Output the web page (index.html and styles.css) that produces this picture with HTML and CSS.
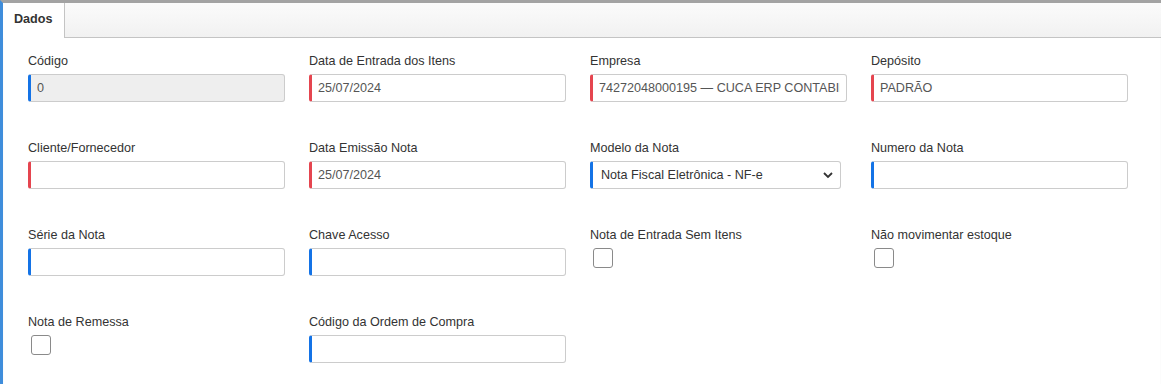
FILE: index.html
```html
<!DOCTYPE html>
<html>
<head>
    <meta charset="UTF-8">
    <title>Nota de Entrada</title>
    <link rel="stylesheet" href="styles.css">
</head>
<body>
  <div class="panel">
    <div class="tabs">
      <div class="tab active">Dados</div>
    </div>
    <div class="form">
      <div class="field">
        <label>Código</label>
        <input type="text" class="ctl req-blue readonly" value="0" readonly>
      </div>
      <div class="field">
        <label>Data de Entrada dos Itens</label>
        <input type="text" class="ctl req-red" value="25/07/2024">
      </div>
      <div class="field">
        <label>Empresa</label>
        <input type="text" class="ctl req-red" value="74272048000195 — CUCA ERP CONTABILIDADE">
      </div>
      <div class="field">
        <label>Depósito</label>
        <input type="text" class="ctl req-red" value="PADRÃO">
      </div>

      <div class="field">
        <label>Cliente/Fornecedor</label>
        <input type="text" class="ctl req-red" value="">
      </div>
      <div class="field">
        <label>Data Emissão Nota</label>
        <input type="text" class="ctl req-red" value="25/07/2024">
      </div>
      <div class="field">
        <label>Modelo da Nota</label>
        <select class="ctl req-blue sel">
          <option selected>Nota Fiscal Eletrônica - NF-e</option>
          <option>Nota Fiscal de Consumidor - NFC-e</option>
        </select>
      </div>
      <div class="field">
        <label>Numero da Nota</label>
        <input type="text" class="ctl req-blue" value="">
      </div>

      <div class="field">
        <label>Série da Nota</label>
        <input type="text" class="ctl req-blue" value="">
      </div>
      <div class="field">
        <label>Chave Acesso</label>
        <input type="text" class="ctl req-blue" value="">
      </div>
      <div class="field">
        <label>Nota de Entrada Sem Itens</label>
        <input type="checkbox" class="check">
      </div>
      <div class="field">
        <label>Não movimentar estoque</label>
        <input type="checkbox" class="check">
      </div>

      <div class="field">
        <label>Nota de Remessa</label>
        <input type="checkbox" class="check">
      </div>
      <div class="field">
        <label>Código da Ordem de Compra</label>
        <input type="text" class="ctl req-blue" value="">
      </div>
    </div>
  </div>
</body>
</html>
```

FILE: styles.css
```css
html, body{
    margin: 0;
    height: 100%;
}
body{
    background: #fff;
    font-family: "Liberation Sans", Arial, sans-serif;
    font-size: 12.6px;
    color: #333;
}
.panel{
    border-left: 3px solid #3f8ddb;
    border-top: 3px solid #a3a3a3;
    box-shadow: inset 0 1px 1px rgba(0,0,0,0.15);
    min-height: 100%;
    box-sizing: border-box;
}
.tabs{
    display: flex;
    height: 34px;
    background: linear-gradient(#fbfbfb, #f1f1f1);
    border-bottom: 1px solid #c4c4c4;
}
.tab{
    padding: 0 11px 0 11px;
    line-height: 33px;
    font-weight: bold;
    color: #333;
    border-right: 1px solid #c4c4c4;
}
.tab.active{
    background: #fff;
    height: 35px;
}
.form{
    display: grid;
    grid-template-columns: repeat(4, 281px);
    row-gap: 37px;
    padding: 14px 0 0 25px;
}
.field{
    display: flex;
    flex-direction: column;
    align-items: flex-start;
}
.field label{
    line-height: 18px;
    margin-bottom: 4px;
    color: #333;
}
.ctl{
    box-sizing: border-box;
    width: 257px;
    height: 28px;
    margin: 0;
    padding: 0 6px;
    border: 1px solid #ccc;
    border-radius: 3px;
    font-family: "Liberation Sans", Arial, sans-serif;
    font-size: 12.6px;
    color: #555;
    background: #fff;
    outline: none;
}
.req-red{
    border-left: 3px solid #e5454f;
}
.req-blue{
    border-left: 3px solid #1473e6;
}
.readonly{
    background: #eee;
}
.sel{
    width: 251px;
    appearance: none;
    -webkit-appearance: none;
    padding-left: 8px;
    color: #333;
    background: #fff url("data:image/svg+xml;utf8,<svg xmlns='http://www.w3.org/2000/svg' width='10' height='8' viewBox='0 0 10 8'><path d='M1 2 L5 6 L9 2' fill='none' stroke='%23333' stroke-width='1.8'/></svg>") no-repeat right 7px center;
}
.check{
    appearance: none;
    -webkit-appearance: none;
    box-sizing: border-box;
    width: 20px;
    height: 20px;
    margin: 0 0 0 3px;
    border: 1px solid #8a8a8a;
    border-radius: 3px;
    background: #fff;
}
```
